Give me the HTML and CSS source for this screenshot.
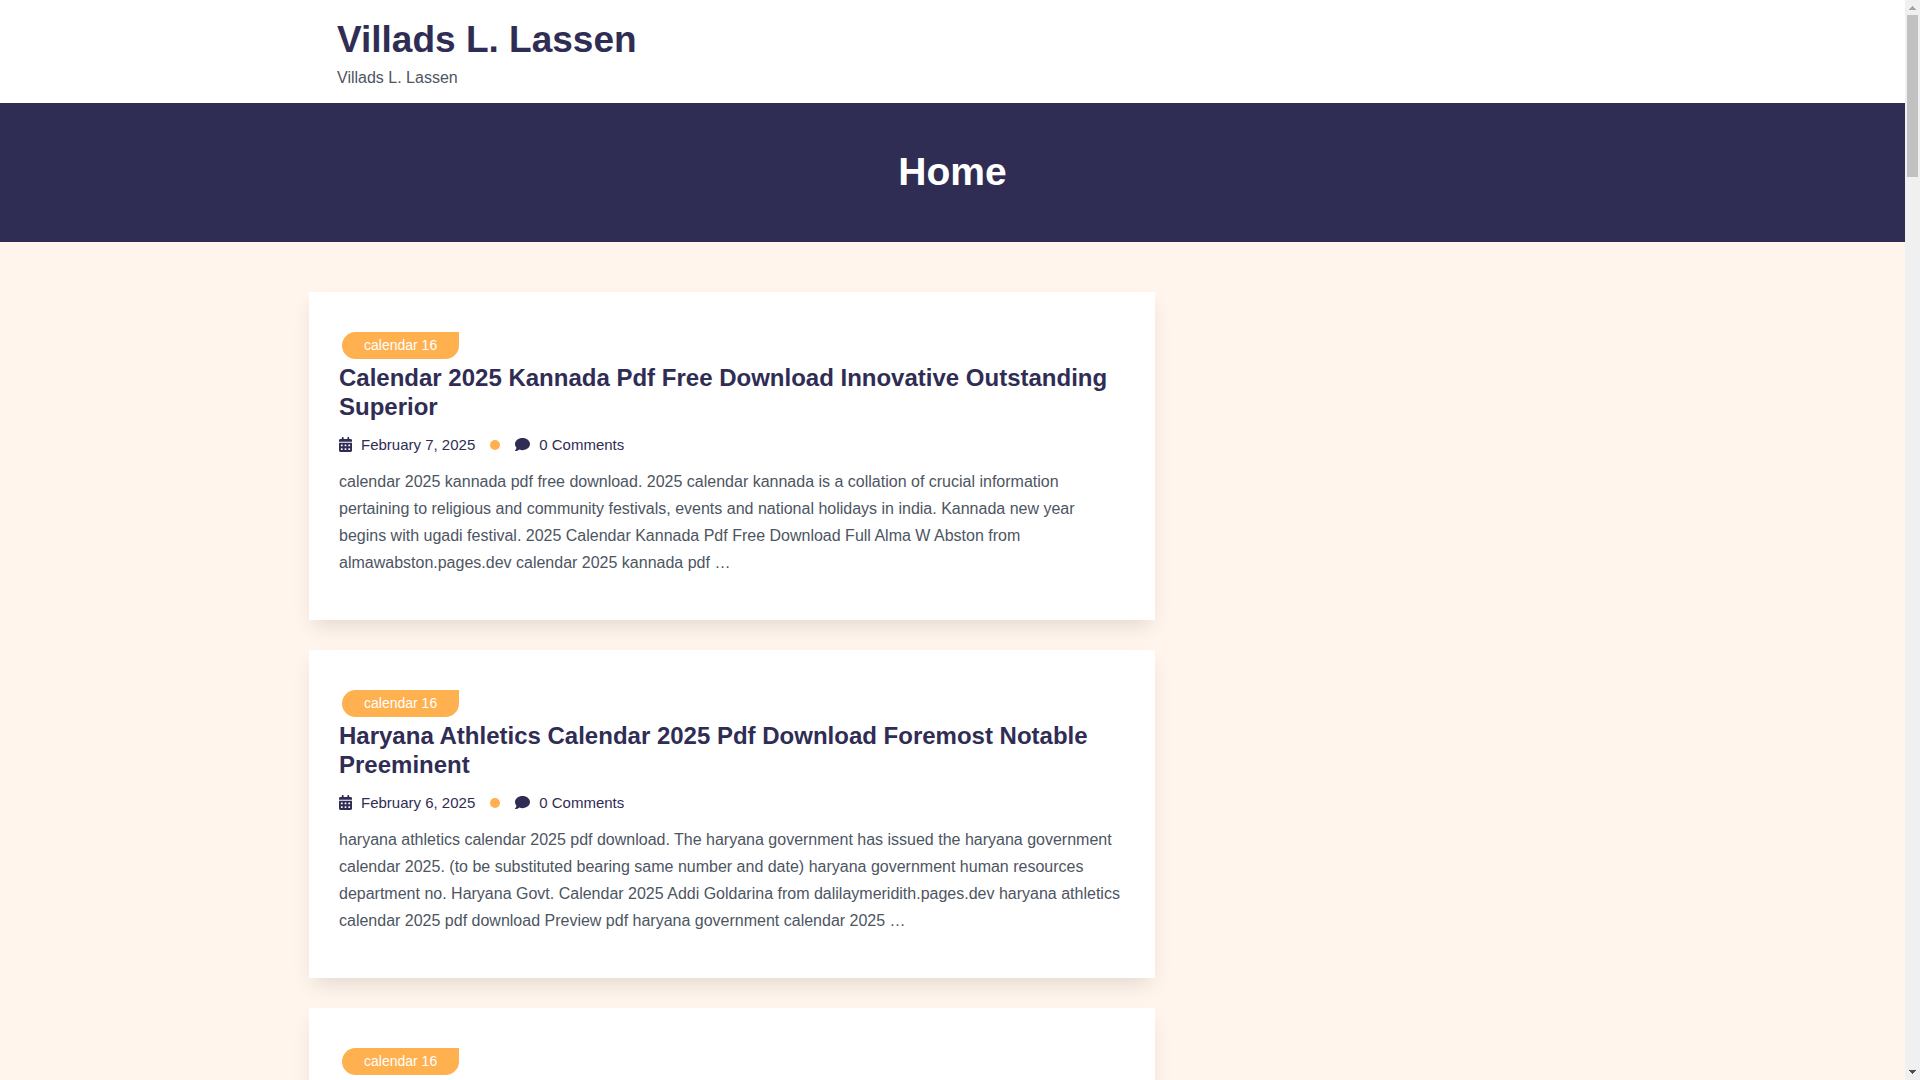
FILE: index.html
```html
<!doctype html>
<html lang="en">
<head>
    <meta charset="utf-8">
    <title>Villads L. Lassen</title>
    <link rel="stylesheet" href="styles.css">
</head>
<body>
    <!-- icons used in every post -->
    <svg class="sprite" aria-hidden="true">
        <symbol id="calendar" viewBox="0 0 448 512">
            <path d="M128 0c17.7 0 32 14.3 32 32V64H288V32c0-17.700 14.300-32 32-32s32 14.300 32 32V64h48c26.500 0 48 21.500 48 48v48H0V112C0 85.500 21.500 64 48 64H96V32c0-17.700 14.300-32 32-32zM0 192H448V464c0 26.500-21.500 48-48 48H48c-26.500 0-48-21.500-48-48V192zm64 80v32c0 8.800 7.200 16 16 16h32c8.800 0 16-7.200 16-16V272c0-8.800-7.200-16-16-16H80c-8.800 0-16 7.200-16 16zm128 0v32c0 8.800 7.200 16 16 16h32c8.800 0 16-7.200 16-16V272c0-8.800-7.200-16-16-16H208c-8.800 0-16 7.200-16 16zm144-16c-8.800 0-16 7.200-16 16v32c0 8.800 7.200 16 16 16h32c8.800 0 16-7.200 16-16V272c0-8.800-7.200-16-16-16H336zM64 400v32c0 8.800 7.200 16 16 16h32c8.800 0 16-7.200 16-16V400c0-8.800-7.200-16-16-16H80c-8.800 0-16 7.200-16 16zm144-16c-8.800 0-16 7.200-16 16v32c0 8.800 7.200 16 16 16h32c8.800 0 16-7.200 16-16V400c0-8.800-7.200-16-16-16H208zm112 16v32c0 8.800 7.200 16 16 16h32c8.800 0 16-7.200 16-16V400c0-8.800-7.200-16-16-16H336c-8.800 0-16 7.200-16 16z"/>
        </symbol>
        <symbol id="comment" viewBox="0 0 512 512">
            <path d="M512 240c0 114.900-114.600 208-256 208c-37.100 0-72.300-6.400-104.100-17.900c-11.900 8.700-31.300 20.600-54.300 30.600C73.600 471.100 44.700 480 16 480c-6.500 0-12.300-3.900-14.800-9.900s-1.100-12.800 3.400-17.400c4.100-4.200 19-24.200 31-46.600c5.800-11.300 11.600-26.200 12.500-42.400C17.700 328.500 0 286.100 0 240C0 125.100 114.600 32 256 32s256 93.100 256 208z"/>
        </symbol>
    </svg>

    <div class="page">
        <header class="header">
            <div class="container brand">
                <h1 class="site-title"><a href="#">Villads L. Lassen</a></h1>
                <p class="tagline">Villads L. Lassen</p>
            </div>
        </header>

        <div class="banner">
            <h2>Home</h2>
        </div>

        <main class="container content">
            <div class="posts">
                <article class="post">
                    <a class="tag" href="#">calendar 16</a>
                    <h3 class="post-title"><a href="#">Calendar 2025 Kannada Pdf Free Download Innovative Outstanding Superior</a></h3>
                    <div class="meta">
                        <a href="#"><svg class="icon-calendar" aria-hidden="true"><use href="#calendar"/></svg>February 7, 2025</a>
                        <span class="dot"></span>
                        <a href="#"><svg class="icon-comment" aria-hidden="true"><use href="#comment"/></svg>0 Comments</a>
                    </div>
                    <p class="excerpt">calendar 2025 kannada pdf free download. 2025 calendar kannada is a collation of crucial information pertaining to religious and community festivals, events and national holidays in india. Kannada new year begins with ugadi festival. 2025 Calendar Kannada Pdf Free Download Full Alma W Abston from almawabston.pages.dev calendar 2025 kannada pdf …</p>
                </article>

                <article class="post">
                    <a class="tag" href="#">calendar 16</a>
                    <h3 class="post-title"><a href="#">Haryana Athletics Calendar 2025 Pdf Download Foremost Notable Preeminent</a></h3>
                    <div class="meta">
                        <a href="#"><svg class="icon-calendar" aria-hidden="true"><use href="#calendar"/></svg>February 6, 2025</a>
                        <span class="dot"></span>
                        <a href="#"><svg class="icon-comment" aria-hidden="true"><use href="#comment"/></svg>0 Comments</a>
                    </div>
                    <p class="excerpt">haryana athletics calendar 2025 pdf download. The haryana government has issued the haryana government calendar 2025. (to be substituted bearing same number and date) haryana government human resources department no. Haryana Govt. Calendar 2025 Addi Goldarina from dalilaymeridith.pages.dev haryana athletics calendar 2025 pdf download Preview pdf haryana government calendar 2025 …</p>
                </article>

                <article class="post">
                    <a class="tag" href="#">calendar 16</a>
                </article>
            </div>
        </main>
    </div>

    <div class="scrollbar" aria-hidden="true">
        <svg class="arrow" viewBox="0 0 7 4"><path fill="#a3a3a3" d="M3 0h1v1h1v1h1v1h1v1H0V3h1V2h1V1h1z"/></svg>
        <div class="track"><div class="thumb"></div></div>
        <svg class="arrow" viewBox="0 0 7 4"><path fill="#505050" d="M0 0h7v1H6v1H5v1H4v1H3V3H2V2H1V1H0z"/></svg>
    </div>
</body>
</html>
```
FILE: styles.css
```css
* {
    margin: 0;
    padding: 0;
    box-sizing: border-box;
}
body {
    display: flex;
    height: 100vh;
    overflow: hidden;
    font-family: "Liberation Sans", Arial, sans-serif;
    font-size: 16px;
    line-height: 27px;
    color: #4d5562;
    background-color: #fff5ec;
}
a {
    color: inherit;
    text-decoration: none;
}
.sprite {
    display: none;
}
.page {
    flex: 1;
    min-width: 0;
    overflow: hidden;
}
.container {
    max-width: 1319px;
    margin: 0 auto;
    padding: 0 16px;
}

/* header */
.header {
    padding: 16px 0 12px;
    background-color: #fff;
}
.brand {
    padding: 0 44px;
}
.site-title {
    font-size: 37px;
    line-height: 48px;
    color: #302d55;
}
.banner {
    padding: 45px 0 47px;
    text-align: center;
    color: #fff;
    background-color: #302d55;
}
.banner h2 {
    font-size: 39px;
    line-height: 47px;
}

/* posts */
.content {
    display: grid;
    grid-template-columns: 2fr 1fr;
    gap: 18px;
    padding-top: 50px;
}
.post {
    padding: 40px 30px 44px;
    margin-bottom: 30px;
    background-color: #fff;
    box-shadow: 0 10px 20px -5px rgba(48, 45, 30, 0.14);
}
.tag {
    display: block;
    width: fit-content;
    margin: 0 3px 4px;
    padding: 0 22px;
    font-size: 14px;
    color: #fff;
    background-color: #ffb04f;
    border-radius: 14px 0 14px 14px;
}
.post-title {
    margin-bottom: 10px;
    font-size: 24px;
    line-height: 29px;
    color: #302d55;
}
.meta {
    display: flex;
    align-items: center;
    gap: 15px;
    margin-bottom: 10px;
    font-size: 15px;
    color: #302d55;
}
.meta a {
    display: flex;
    align-items: center;
    gap: 9px;
}
.icon-calendar,
.icon-comment {
    width: 13px;
    height: 15px;
    fill: currentColor;
}
.icon-comment {
    width: 15px;
}
.dot {
    width: 10px;
    height: 10px;
    border-radius: 50%;
    background-color: #ffb04f;
}

/* scrollbar */
.scrollbar {
    display: flex;
    flex-direction: column;
    align-items: center;
    width: 15px;
    padding: 6px 2px;
    background-color: #f0f0f0;
}
.arrow {
    width: 7px;
    height: 4px;
}
.track {
    flex: 1;
    width: 100%;
    padding: 5px 0;
}
.thumb {
    height: 162px;
    background-color: #c1c1c1;
}
```
